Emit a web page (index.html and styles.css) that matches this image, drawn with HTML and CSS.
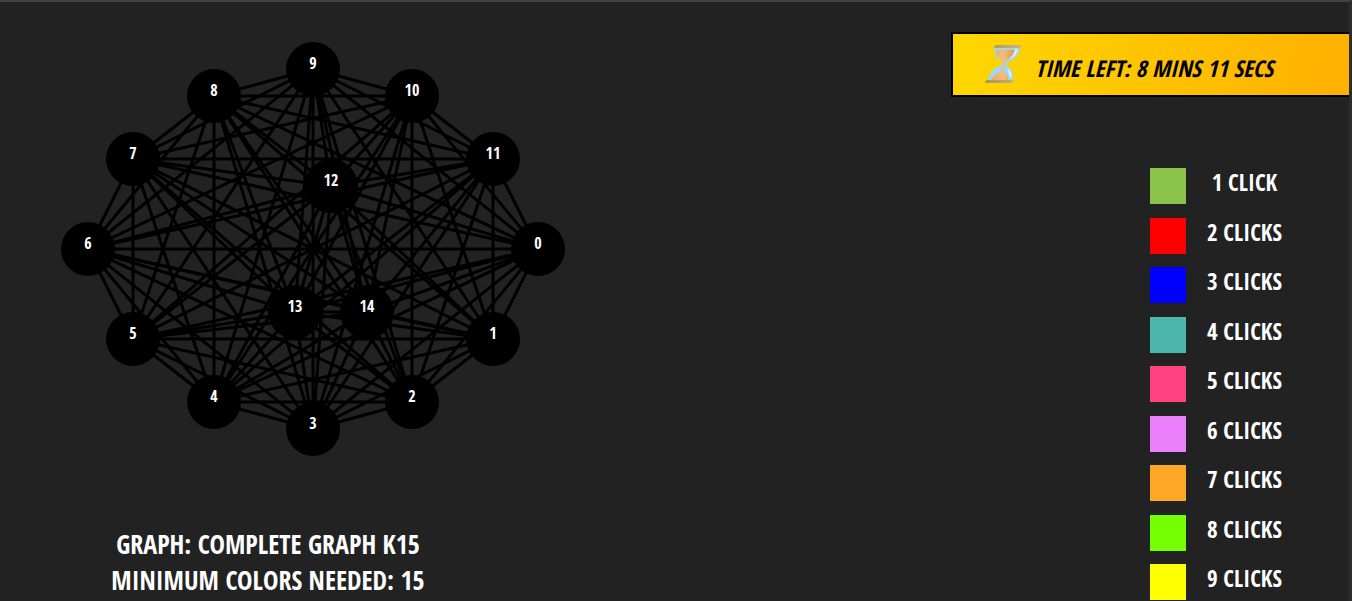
FILE: index.html
```html
<!DOCTYPE html>
<html lang="en">
<head>
<meta charset="utf-8">
<title>Graph Coloring</title>
<link rel="stylesheet" href="styles.css">
</head>
<body>
<main class="page">
  <section class="board">
    <svg class="graph" viewBox="0 0 600 500" role="img" aria-label="Complete graph K15">
      <g class="edges" id="edges"></g>
      <g id="nodes"></g>
    </svg>
    <div class="summary">
      <p>GRAPH: COMPLETE GRAPH K15</p>
      <p>MINIMUM COLORS NEEDED: 15</p>
    </div>
  </section>
  <aside class="side">
    <div class="timer">
      <svg class="hourglass" viewBox="0 0 36 40" aria-hidden="true">
        <defs>
          <linearGradient id="cap" x1="0" x2="1"><stop offset="0" stop-color="#a39a50"/><stop offset="1" stop-color="#bcb78c"/></linearGradient>
          <linearGradient id="sand" x1="0" x2="1"><stop offset="0" stop-color="#f0a650"/><stop offset=".5" stop-color="#f4bd7b"/><stop offset="1" stop-color="#dc9c48"/></linearGradient>
        </defs>
        <path fill="#a3d5f3" d="M10 3H35C35 11 29 16 23 18C21 19 21 21 22 22C28 24 29 31 27 37H2C4 29 10 23 16 21C18 20 18 18 17 17C11 15 8 9 10 3Z"/>
        <path fill="#e4f0e8" d="M30 5H33C32 10 29 13 25 15C28 11 29 9 30 5ZM22 24C26 27 27 30 26 34C24 33 24 28 22 24Z"/>
        <path fill="url(#sand)" d="M11 6Q20 5 30 6C28 12 24 15 20 17L18 28C22 29 24 32 23 36H6C8 32 12 29 16 28L18 17C14 15 11 11 11 6Z"/>
        <path fill="url(#cap)" d="M10 1H36L35 4H9ZM1 36H28L27 39H0Z"/>
      </svg>
      <span>TIME LEFT: 8 MINS 11 SECS</span>
    </div>
    <ul class="legend">
      <li><i class="swatch green"></i><span>1 CLICK</span></li>
      <li><i class="swatch red"></i><span>2 CLICKS</span></li>
      <li><i class="swatch blue"></i><span>3 CLICKS</span></li>
      <li><i class="swatch teal"></i><span>4 CLICKS</span></li>
      <li><i class="swatch pink"></i><span>5 CLICKS</span></li>
      <li><i class="swatch violet"></i><span>6 CLICKS</span></li>
      <li><i class="swatch orange"></i><span>7 CLICKS</span></li>
      <li><i class="swatch lime"></i><span>8 CLICKS</span></li>
      <li><i class="swatch yellow"></i><span>9 CLICKS</span></li>
    </ul>
  </aside>
</main>
<script src="graph.js"></script>
</body>
</html>
```
FILE: styles.css
```css
* { box-sizing: border-box; }

body {
  margin: 0;
  background: #222;
  color: #fff;
  font-family: "Open Sans Condensed", "Roboto Condensed", "Liberation Sans", sans-serif;
  font-weight: 700;
}

.page {
  display: flex;
  justify-content: space-between;
  min-height: 100vh;
  border-top: 2px solid #404040;
  border-right: 3px solid #2c2c2c;
  overflow: hidden;
}

.board { width: 536px; }

.graph {
  display: block;
  width: 600px;
  height: 500px;
}

.edges { stroke: #000; stroke-width: 3; }

.node circle { fill: #000; }

.node text {
  fill: #fff;
  font-size: 16px;
  text-anchor: middle;
}

.summary {
  padding-top: 24px;
  font-size: 26px;
  line-height: 36px;
  text-align: center;
  white-space: nowrap;
}

.summary p { margin: 0; }

.side {
  width: 398px;
  padding-top: 30px;
}

.timer {
  display: flex;
  align-items: center;
  gap: 14px;
  height: 65px;
  padding-left: 32px;
  border: 2px solid #000;
  border-right: 0;
  background: linear-gradient(100deg, #ffd700, #ffb000);
  color: #000;
  font-size: 23px;
  font-style: italic;
  white-space: nowrap;
}

.timer span { padding-top: 6px; }

.hourglass {
  width: 36px;
  height: 40px;
  margin-bottom: 2px;
  flex: none;
}

.legend {
  display: flex;
  flex-direction: column;
  justify-content: space-between;
  min-height: 432px;
  margin: 71px 46px 0 199px;
  padding: 0;
  list-style: none;
}

.legend li {
  display: flex;
  height: 36px;
}

.legend span {
  flex: 1;
  font-size: 23px;
  line-height: 28px;
  text-align: center;
}

.swatch {
  width: 36px;
  height: 36px;
}

.green { background: #8bc34a; }
.red { background: #f00; }
.blue { background: #00f; }
.teal { background: #4db6ac; }
.pink { background: #ff4081; }
.violet { background: #ea80fc; }
.orange { background: #ffa726; }
.lime { background: #76ff03; }
.yellow { background: #ff0; }
```
FILE: graph.js
```js
const SVG = "http://www.w3.org/2000/svg";
const points = [
  [538, 247], [493, 337], [412, 400], [313, 427], [214, 400],
  [133, 337], [88, 247], [133, 157], [214, 94], [313, 67],
  [412, 94], [493, 157], [331, 184], [295, 310], [367, 310]
];

function add(parent, tag, attributes) {
  const element = document.createElementNS(SVG, tag);
  for (const name in attributes) element.setAttribute(name, attributes[name]);
  parent.appendChild(element);
  return element;
}

const edges = document.getElementById("edges");
const nodes = document.getElementById("nodes");

points.forEach(([x, y], i) => {
  for (const [x2, y2] of points.slice(i + 1)) {
    add(edges, "line", { x1: x, y1: y, x2, y2 });
  }
  const node = add(nodes, "g", { class: "node" });
  add(node, "circle", { cx: x, cy: y, r: 27 });
  add(node, "text", { x, y }).textContent = i;
});
```
